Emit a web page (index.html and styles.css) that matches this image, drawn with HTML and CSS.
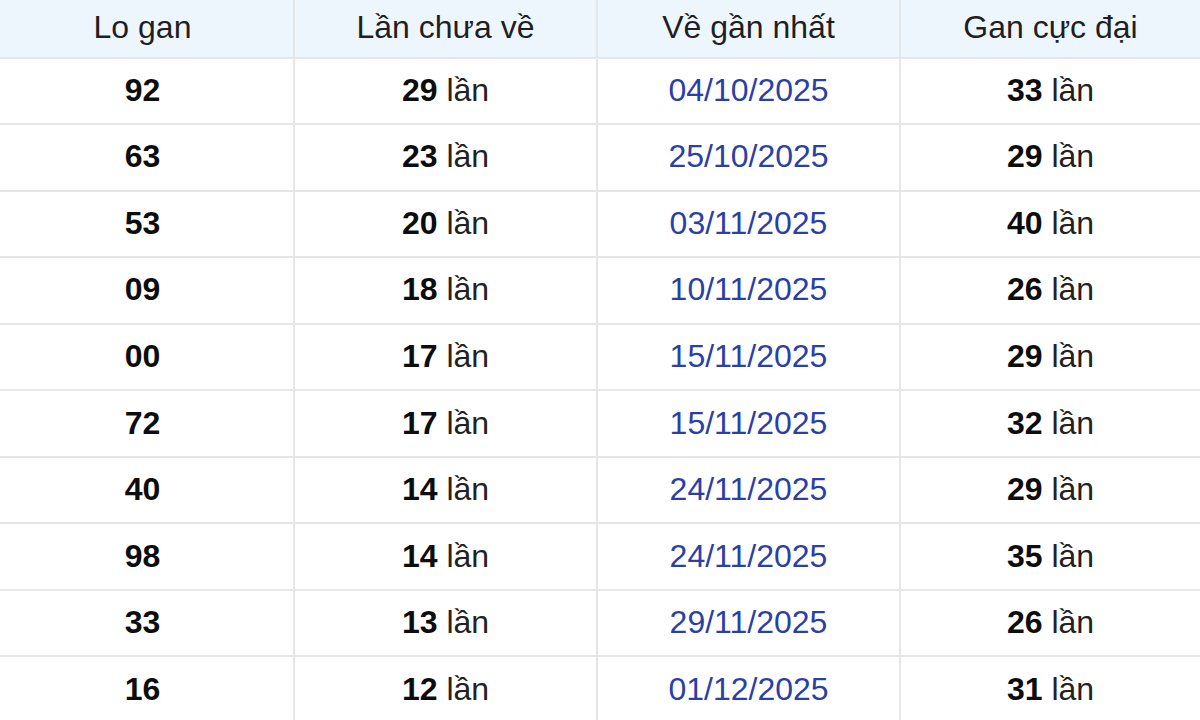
FILE: index.html
```html
<!DOCTYPE html>
<html lang="vi">
<head>
<meta charset="utf-8">
<title>Lo gan</title>
<link rel="stylesheet" href="styles.css">
</head>
<body>
<div class="table">
  <div class="cell head">Lo gan</div>
  <div class="cell head">Lần chưa về</div>
  <div class="cell head">Về gần nhất</div>
  <div class="cell head last">Gan cực đại</div>

  <div class="cell"><b>92</b></div>
  <div class="cell"><b>29</b>&nbsp;lần</div>
  <div class="cell date">04/10/2025</div>
  <div class="cell last"><b>33</b>&nbsp;lần</div>

  <div class="cell"><b>63</b></div>
  <div class="cell"><b>23</b>&nbsp;lần</div>
  <div class="cell date">25/10/2025</div>
  <div class="cell last"><b>29</b>&nbsp;lần</div>

  <div class="cell"><b>53</b></div>
  <div class="cell"><b>20</b>&nbsp;lần</div>
  <div class="cell date">03/11/2025</div>
  <div class="cell last"><b>40</b>&nbsp;lần</div>

  <div class="cell"><b>09</b></div>
  <div class="cell"><b>18</b>&nbsp;lần</div>
  <div class="cell date">10/11/2025</div>
  <div class="cell last"><b>26</b>&nbsp;lần</div>

  <div class="cell"><b>00</b></div>
  <div class="cell"><b>17</b>&nbsp;lần</div>
  <div class="cell date">15/11/2025</div>
  <div class="cell last"><b>29</b>&nbsp;lần</div>

  <div class="cell"><b>72</b></div>
  <div class="cell"><b>17</b>&nbsp;lần</div>
  <div class="cell date">15/11/2025</div>
  <div class="cell last"><b>32</b>&nbsp;lần</div>

  <div class="cell"><b>40</b></div>
  <div class="cell"><b>14</b>&nbsp;lần</div>
  <div class="cell date">24/11/2025</div>
  <div class="cell last"><b>29</b>&nbsp;lần</div>

  <div class="cell"><b>98</b></div>
  <div class="cell"><b>14</b>&nbsp;lần</div>
  <div class="cell date">24/11/2025</div>
  <div class="cell last"><b>35</b>&nbsp;lần</div>

  <div class="cell"><b>33</b></div>
  <div class="cell"><b>13</b>&nbsp;lần</div>
  <div class="cell date">29/11/2025</div>
  <div class="cell last"><b>26</b>&nbsp;lần</div>

  <div class="cell"><b>16</b></div>
  <div class="cell"><b>12</b>&nbsp;lần</div>
  <div class="cell date">01/12/2025</div>
  <div class="cell last"><b>31</b>&nbsp;lần</div>
</div>
</body>
</html>
```
FILE: styles.css
```css
html, body {
  margin: 0;
  padding: 0;
  background: #ffffff;
  overflow: hidden;
}

body {
  font-family: "Liberation Sans", Arial, sans-serif;
  font-size: 32px;
  color: #222222;
}

.table {
  display: grid;
  grid-template-columns: 303px 303px 303px 299px;
  grid-template-rows: 58.5px;
  grid-auto-rows: 66.55px;
  width: 1208px;
  margin-left: -8px;
}

.cell {
  box-sizing: border-box;
  display: flex;
  align-items: center;
  justify-content: center;
  border-right: 2px solid #e6e6e6;
  border-bottom: 2px solid #e6e6e6;
  white-space: nowrap;
  padding-bottom: 1px;
}

.cell.last {
  border-right: none;
}

.head {
  background: #eef6fd;
  color: #1f1f1f;
  padding-bottom: 2px;
}

.cell b {
  font-weight: bold;
  color: #0d0d0d;
}

.date {
  color: #2b40a6;
}
```
